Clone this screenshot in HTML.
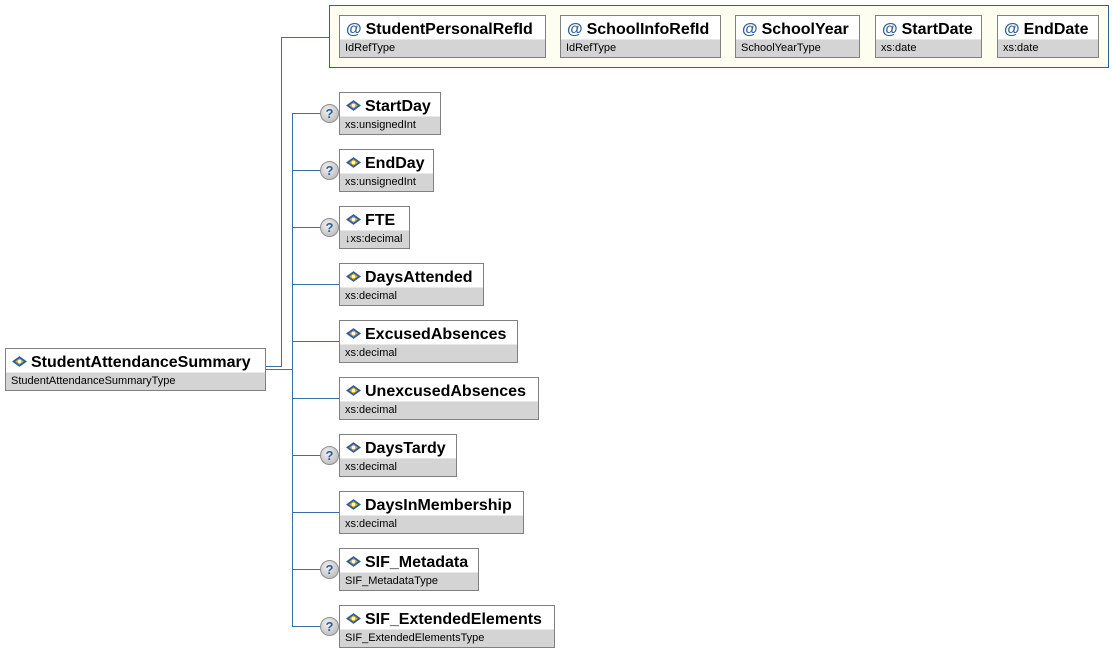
<!DOCTYPE html>
<html><head><style>
body{margin:0;width:1113px;height:652px;background:#fff;position:relative;overflow:hidden;font-family:"Liberation Sans",Arial,sans-serif}
.b{position:absolute;border:1px solid #808080;background:#fff;box-sizing:border-box;height:43px}
.b .h{height:24px;font-weight:bold;font-size:16px;line-height:27px;padding-left:6px;white-space:nowrap;color:#000}
.b .t{position:absolute;left:0;right:0;bottom:0;height:17px;background:#d4d4d4;font-size:11px;line-height:16px;padding-left:5px;color:#000;border-top:1px solid #e8e8e8}
.l{position:absolute;background:#3a6ea5}
.q{position:absolute;width:17px;height:17px;border-radius:50%;background:radial-gradient(circle at 40% 35%,#f2f2f2,#b0b0b0);border:1px solid #909090;color:#2e5f97;font-weight:bold;font-size:13px;line-height:17px;text-align:center}
.ic{display:inline-block;width:15px;height:11px;vertical-align:0px;margin-right:4px}
.at{color:#2e5f97;font-size:16px;margin-right:4px}
</style></head><body>
<svg width="0" height="0" style="position:absolute"><defs><g id="d"><path d="M7 0 L14 5 L7 10 L0 5Z" fill="#2a5ca8"/><path d="M3 5 L7 2 L11 5 L7 8Z" fill="#f0b400"/><circle cx="7" cy="5" r="1.5" fill="#fff"/></g></defs></svg>

<div style="position:absolute;left:329px;top:5px;width:780px;height:63px;background:#fefef0;border:1px solid #2e5f97;box-sizing:border-box"></div>

<div class="l" style="left:265px;top:366px;width:16px;height:1px"></div>
<div class="l" style="left:281px;top:37px;width:1px;height:330px"></div>
<div class="l" style="left:281px;top:37px;width:48px;height:1px"></div>
<div class="l" style="left:265px;top:369px;width:27px;height:1px"></div>
<div class="l" style="left:292px;top:113px;width:1px;height:514px"></div>

<div class="b" style="left:5px;top:348px;width:261px"><div class="h"><svg class="ic" viewBox="0 0 14 10"><use href="#d"/></svg>StudentAttendanceSummary</div><div class="t">StudentAttendanceSummaryType</div></div>

<div class="b" style="left:339px;top:15px;width:207px"><div class="h"><span class="at">@</span>StudentPersonalRefId</div><div class="t">IdRefType</div></div>
<div class="b" style="left:560px;top:15px;width:161px"><div class="h"><span class="at">@</span>SchoolInfoRefId</div><div class="t">IdRefType</div></div>
<div class="b" style="left:735px;top:15px;width:125px"><div class="h"><span class="at">@</span>SchoolYear</div><div class="t">SchoolYearType</div></div>
<div class="b" style="left:875px;top:15px;width:107px"><div class="h"><span class="at">@</span>StartDate</div><div class="t">xs:date</div></div>
<div class="b" style="left:997px;top:15px;width:102px"><div class="h"><span class="at">@</span>EndDate</div><div class="t">xs:date</div></div>

<div class="l" style="left:292px;top:113px;width:47px;height:1px"></div><div class="q" style="left:320px;top:104px">?</div>
<div class="b" style="left:339px;top:92px;width:102px"><div class="h"><svg class="ic" viewBox="0 0 14 10"><use href="#d"/></svg>StartDay</div><div class="t">xs:unsignedInt</div></div>

<div class="l" style="left:292px;top:170px;width:47px;height:1px"></div><div class="q" style="left:320px;top:161px">?</div>
<div class="b" style="left:339px;top:149px;width:95px"><div class="h"><svg class="ic" viewBox="0 0 14 10"><use href="#d"/></svg>EndDay</div><div class="t">xs:unsignedInt</div></div>

<div class="l" style="left:292px;top:227px;width:47px;height:1px"></div><div class="q" style="left:320px;top:218px">?</div>
<div class="b" style="left:339px;top:206px;width:71px"><div class="h"><svg class="ic" viewBox="0 0 14 10"><use href="#d"/></svg>FTE</div><div class="t">↓xs:decimal</div></div>

<div class="l" style="left:292px;top:284px;width:47px;height:1px"></div>
<div class="b" style="left:339px;top:263px;width:145px"><div class="h"><svg class="ic" viewBox="0 0 14 10"><use href="#d"/></svg>DaysAttended</div><div class="t">xs:decimal</div></div>

<div class="l" style="left:292px;top:341px;width:47px;height:1px"></div>
<div class="b" style="left:339px;top:320px;width:179px"><div class="h"><svg class="ic" viewBox="0 0 14 10"><use href="#d"/></svg>ExcusedAbsences</div><div class="t">xs:decimal</div></div>

<div class="l" style="left:292px;top:398px;width:47px;height:1px"></div>
<div class="b" style="left:339px;top:377px;width:200px"><div class="h"><svg class="ic" viewBox="0 0 14 10"><use href="#d"/></svg>UnexcusedAbsences</div><div class="t">xs:decimal</div></div>

<div class="l" style="left:292px;top:455px;width:47px;height:1px"></div><div class="q" style="left:320px;top:446px">?</div>
<div class="b" style="left:339px;top:434px;width:118px"><div class="h"><svg class="ic" viewBox="0 0 14 10"><use href="#d"/></svg>DaysTardy</div><div class="t">xs:decimal</div></div>

<div class="l" style="left:292px;top:512px;width:47px;height:1px"></div>
<div class="b" style="left:339px;top:491px;width:185px"><div class="h"><svg class="ic" viewBox="0 0 14 10"><use href="#d"/></svg>DaysInMembership</div><div class="t">xs:decimal</div></div>

<div class="l" style="left:292px;top:569px;width:47px;height:1px"></div><div class="q" style="left:320px;top:560px">?</div>
<div class="b" style="left:339px;top:548px;width:140px"><div class="h"><svg class="ic" viewBox="0 0 14 10"><use href="#d"/></svg>SIF_Metadata</div><div class="t">SIF_MetadataType</div></div>

<div class="l" style="left:292px;top:626px;width:47px;height:1px"></div><div class="q" style="left:320px;top:617px">?</div>
<div class="b" style="left:339px;top:605px;width:216px"><div class="h"><svg class="ic" viewBox="0 0 14 10"><use href="#d"/></svg>SIF_ExtendedElements</div><div class="t">SIF_ExtendedElementsType</div></div>
</body></html>
